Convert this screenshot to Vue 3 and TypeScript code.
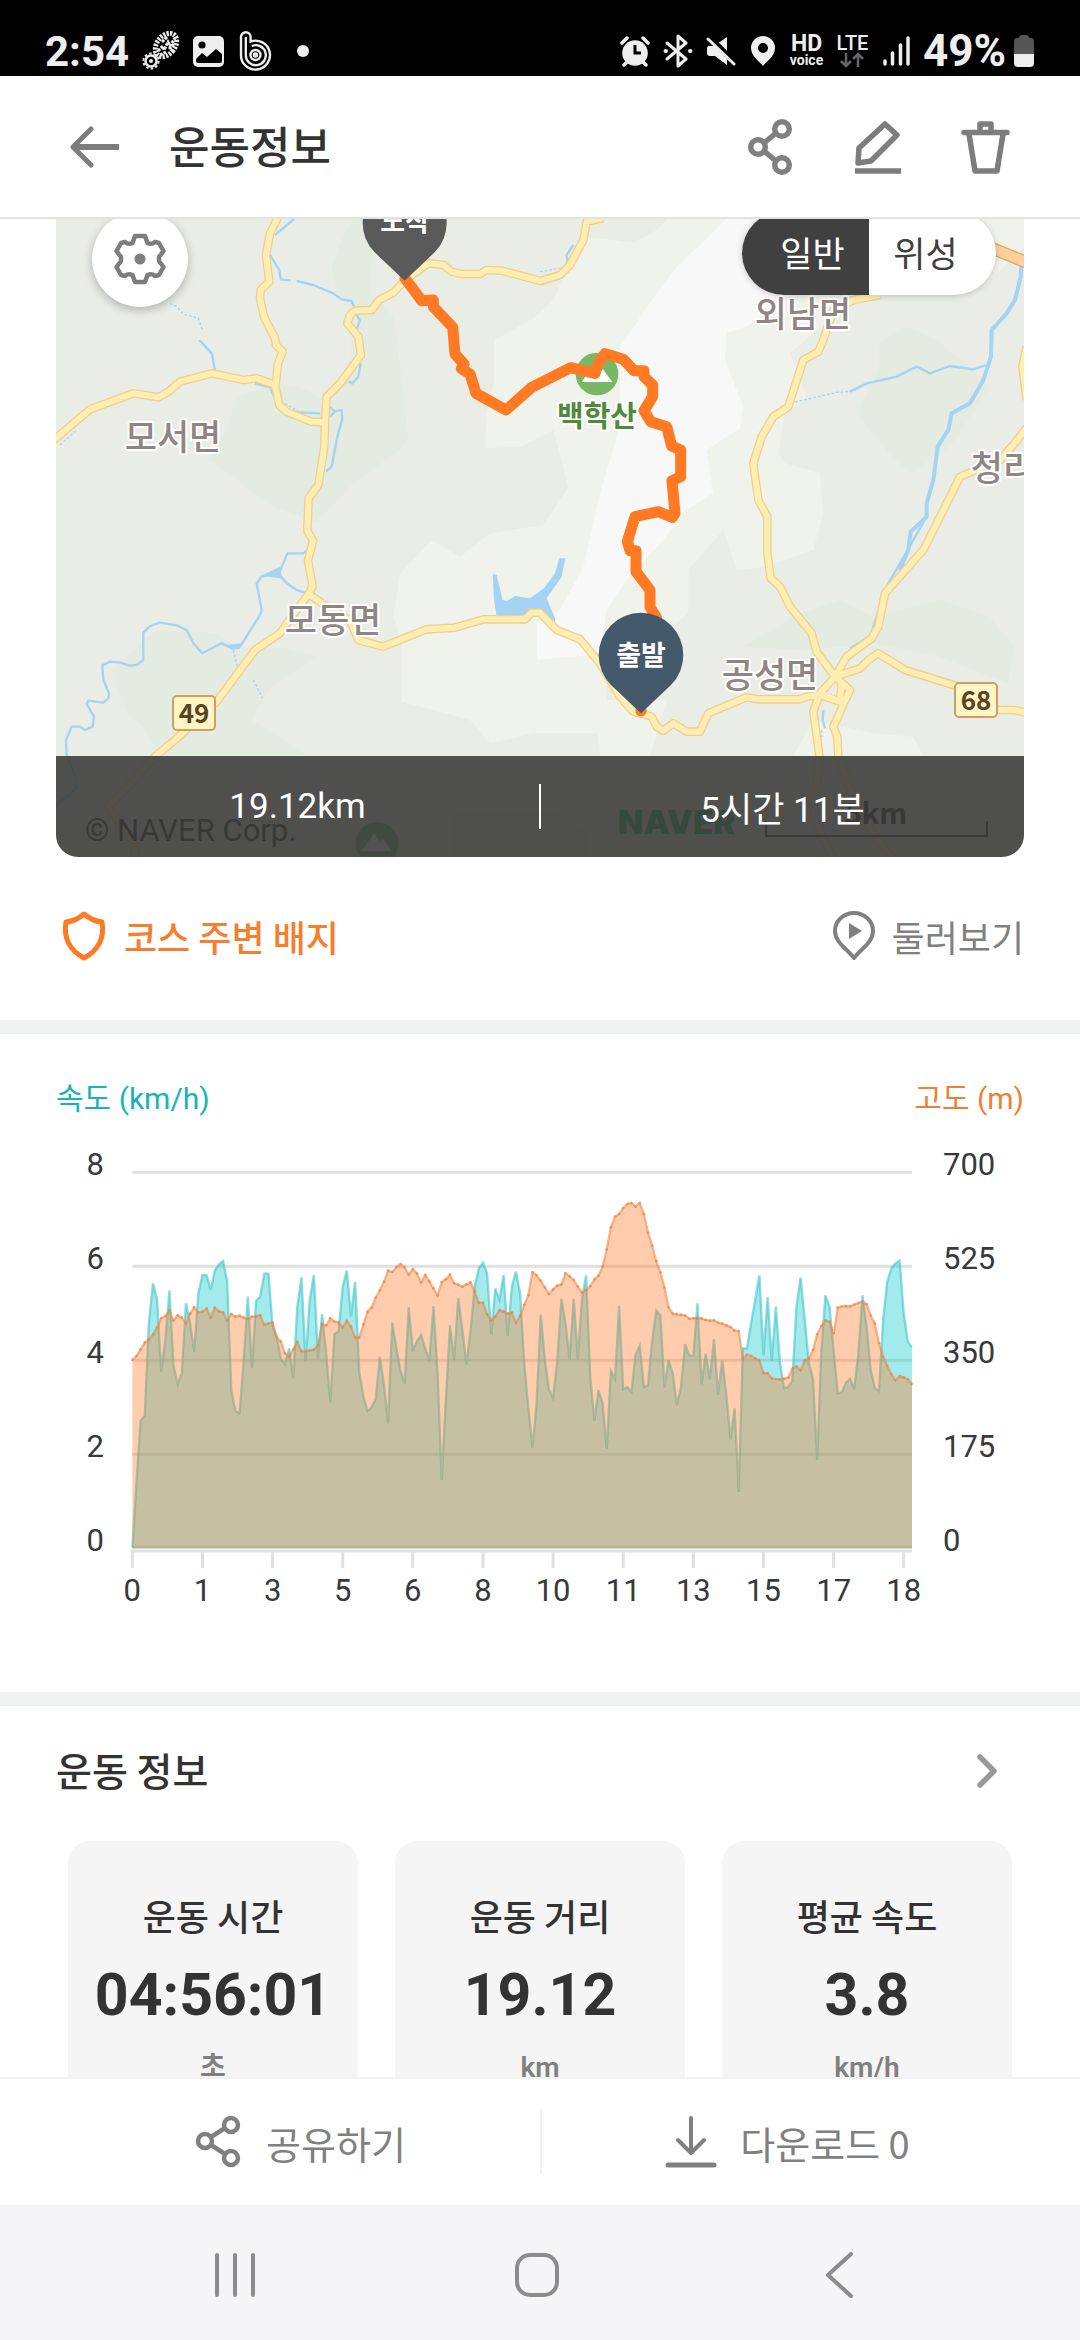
<script setup lang="ts">
import { ref } from 'vue'

type MapStyle = 'normal' | 'satellite'
const mapStyle = ref<MapStyle>('normal')

interface Place { name: string; x: number; y: number }
const places: Place[] = [
  { name: '모서면', x: 133, y: 250 },
  { name: '외남면', x: 763, y: 127 },
  { name: '청리면', x: 979, y: 281 },
  { name: '모동면', x: 293, y: 433 },
  { name: '공성면', x: 730, y: 488 },
]

const shields = [
  { no: '49', x: 133, y: 496 },
  { no: '68', x: 915, y: 483 },
]

const roads: string[] = [
  '720,40 690,100 678,165 688,245 662,270 660,295 672,350 705,415 708,435 728,455 714,490 706,560 718,615 740,635 815,665 850,667',
  '30,730 150,628 280,580 355,592 385,575 420,545 515,520 610,540 650,535 706,555',
  '1690,55 1640,65 1630,120 1590,195 1560,225 1502,243 1385,212 1340,210 1320,222 1265,222 1235,215 1210,195 1165,190 1095,240 1060,278 1018,300 995,330 945,332 930,345 922,370 955,410 963,465 900,550 860,590 855,667 853,740 835,855 806,895 802,992 819,1022 804,1082 818,1158 806,1182 740,1270 720,1300 645,1350 530,1505 405,1620 350,1665 300,1720 205,1820 285,1930 285,1990',
  '806,1182 860,1220 930,1260 955,1320 1028,1340 1160,1288 1245,1283 1330,1258 1455,1258 1475,1238 1500,1238 1550,1290 1620,1318 1680,1390 1740,1490 1780,1535 1835,1550 1850,1580 1870,1592 1900,1570 1940,1595 1980,1595 2005,1540 2120,1492 2155,1498 2280,1498 2300,1490 2340,1485 2400,1505 2405,1450',
  '2520,285 2440,300 2380,330 2360,390 2350,420 2335,455 2290,480 2245,620 2200,650 2165,710 2140,790 2155,900 2182,950 2182,1060 2192,1135 2220,1160 2250,1220 2315,1300 2330,1355 2385,1430',
  '2970,670 2920,735 2880,780 2760,830 2700,950 2650,1050 2535,1180 2515,1280 2495,1315 2420,1370 2385,1430 2340,1480 2320,1535 2340,1680 2320,1830 2350,1920 2400,2010',
  '2385,1430 2460,1405 2485,1380 2515,1360 2595,1410 2740,1455 2870,1530 2920,1530 2970,1540',
  '2385,1430 2430,1470 2380,1580 2392,1610 2395,1670 2440,1790 2500,1900 2570,1990',
  '2960,440 2947,500 2960,600',
]

const rivers: string[] = [
  '762,57 705,105', '690,165 718,210 722,238 752,241', '770,243 820,255 880,280 905,298 935,303 942,320',
  '962,490 955,530 938,550 925,545', '478,420 515,460 525,510', '645,550 690,562 700,585', '780,637 840,640',
  '870,622 885,634 905,630 907,655 890,720 875,800 858,815', '870,650 885,634', '950,345 960,362 950,388',
  '802,1050 790,1060 742,1060 718,1118 665,1130 650,1150 665,1230 660,1245 600,1340 570,1342 545,1330 487,1360 460,1330 440,1290 410,1276 360,1268 330,1278 310,1298 310,1380 290,1395 270,1397 240,1388 210,1385 187,1396 190,1440 207,1480 205,1495 190,1508 145,1502 140,1512 162,1550 158,1580 135,1590 120,1580 95,1580 78,1620 80,1665 110,1740 108,1768 48,1815',
  '715,1120 740,1150 770,1170 800,1180', '1585,205 1580,165 1600,135', '2350,1530 2348,1560 2355,1585',
]
const dottedRivers: string[] = [
  '390,310 410,320 430,342 475,355 487,390', '735,610 780,637', '60,735 110,690', '580,1350 592,1400',
  '640,1440 668,1494', '2265,606 2390,577 2430,575', '1500,215 1560,205', '2345,1590 2345,1620',
]

const track =
  '1095,235 1145,302 1180,300 1180,320 1238,382 1245,462 1272,492 1264,506 1290,522 1308,580 1398,630 1475,562 1592,503 1665,520 1676,488 1695,461 1750,478 1782,512 1812,512 1812,530 1838,555 1838,590 1812,632 1832,665 1880,680 1895,738 1922,750 1922,830 1896,842 1905,940 1897,952 1855,935 1785,950 1762,1025 1770,1052 1788,1052 1788,1115 1830,1170 1830,1220 1850,1255'

/* Samples run left to right, one every STEP units; the zero line is at BASE. */
const X0 = 277
const STEP = 2339 / 189
const BASE = 1225
const altitude: number[] = [
  660, 648, 628, 608, 598, 584, 563, 534, 528, 512, 541, 526, 533, 550, 521, 502, 518, 515, 506, 532,
  503, 514, 517, 542, 522, 530, 527, 533, 537, 530, 529, 526, 554, 550, 548, 591, 605, 640, 650, 628,
  606, 634, 634, 631, 629, 616, 552, 556, 535, 545, 548, 562, 542, 560, 592, 592, 553, 515, 503, 473,
  451, 425, 392, 396, 382, 372, 382, 404, 388, 400, 427, 405, 424, 445, 466, 426, 418, 404, 430, 434,
  440, 433, 427, 455, 488, 488, 523, 541, 530, 510, 515, 521, 517, 548, 528, 495, 465, 397, 406, 422,
  443, 462, 448, 437, 434, 400, 409, 420, 440, 458, 450, 438, 418, 407, 380, 328, 262, 230, 222, 204,
  192, 189, 200, 189, 223, 278, 317, 363, 397, 443, 502, 521, 523, 524, 527, 536, 535, 534, 535, 540,
  542, 541, 548, 551, 556, 561, 572, 573, 657, 644, 648, 655, 661, 699, 700, 715, 717, 718, 716, 713,
  686, 679, 691, 661, 656, 630, 583, 558, 541, 545, 580, 503, 499, 498, 499, 494, 489, 485, 493, 527,
  551, 609, 650, 677, 703, 721, 709, 712, 718, 732,
]
const speed: number[] = [
  1223, 1030, 842, 828, 550, 430, 480, 695, 600, 452, 678, 732, 700, 490, 550, 636, 460, 405, 406, 450,
  392, 373, 363, 425, 753, 813, 820, 660, 470, 683, 482, 470, 401, 401, 560, 590, 658, 672, 625, 715,
  500, 412, 664, 480, 405, 656, 522, 640, 787, 582, 574, 440, 392, 529, 426, 695, 768, 813, 802, 777,
  650, 735, 850, 548, 622, 692, 730, 502, 634, 604, 585, 625, 663, 498, 700, 1020, 780, 556, 660, 475,
  570, 673, 570, 440, 385, 368, 400, 583, 446, 480, 405, 588, 440, 395, 460, 670, 805, 923, 790, 524,
  660, 748, 774, 665, 476, 550, 658, 476, 658, 480, 406, 710, 842, 750, 790, 927, 692, 717, 498, 749,
  741, 756, 642, 617, 742, 736, 605, 511, 526, 742, 660, 700, 796, 740, 612, 647, 647, 490, 733, 641,
  718, 598, 764, 661, 765, 898, 805, 1056, 625, 626, 550, 480, 406, 646, 472, 663, 500, 670, 745, 740,
  724, 500, 413, 540, 670, 715, 960, 640, 466, 500, 630, 760, 757, 727, 716, 748, 640, 466, 560, 690,
  745, 753, 540, 425, 385, 370, 362, 520, 605, 622,
]
const px = (i: number): number => Math.round((X0 + i * STEP) * 10) / 10
const line = (d: number[]): string => d.map((y, i) => `${px(i)},${y}`).join(' ')
const area = (d: number[]): string => `${px(0)},${BASE} ${line(d)} ${px(d.length - 1)},${BASE}`

const yAxis = [
  { left: '8', right: '700' },
  { left: '6', right: '525' },
  { left: '4', right: '350' },
  { left: '2', right: '175' },
  { left: '0', right: '0' },
]
const xAxis = ['0', '1', '3', '5', '6', '8', '10', '11', '13', '15', '17', '18']

const stats = [
  { label: '운동 시간', value: '04:56:01', unit: '초' },
  { label: '운동 거리', value: '19.12', unit: 'km' },
  { label: '평균 속도', value: '3.8', unit: 'km/h' },
]
</script>

<template>
  <div class="screen">
    <div class="status">
      <div class="status-side">
        <span class="clock">2:54</span>
        <svg width="38" height="40" viewBox="0 0 38 40" fill="none" stroke="#eee">
          <circle cx="9" cy="30" r="5.500" stroke-width="2.500" />
          <circle cx="9" cy="30" r="7.600" stroke-width="2" stroke-dasharray="2.600 2.200" />
          <circle cx="9" cy="30" r="2" fill="#eee" stroke="none" />
          <ellipse cx="24" cy="14" rx="9" ry="13" transform="rotate(38 24 14)" stroke-width="5" stroke-dasharray="2.200 1.200" />
          <path d="M16 20l5-5 1 4 4-8 2 4 5-8M18 24l6-3M27 18l5-5M20 11l5-5" stroke-width="3" stroke-dasharray="3 1" />
        </svg>
        <svg width="32" height="32" viewBox="0 0 32 32">
          <rect width="31" height="31" y="1" rx="5" fill="#eee" />
          <circle cx="9" cy="10" r="3.600" fill="#000" />
          <path d="M3 24l6-6 5 4 9-8 6 5v7q0 2-2 2H5q-2 0-2-2z" fill="#000" />
        </svg>
        <svg width="34" height="42" viewBox="0 0 34 42" fill="none" stroke="#eee" stroke-width="2.400">
          <path d="M3 24V7a4.800 4.800 0 0 1 9.600 0v4.500A14.500 14.500 0 1 1 3 25z" />
          <path d="M7.800 25V7M7.800 25a10 10 0 1 0 6-9" />
          <circle cx="17.500" cy="25" r="5" />
          <circle cx="17.500" cy="25" r="1.500" />
        </svg>
        <i class="dot"></i>
      </div>
      <div class="status-side">
        <svg width="30" height="32" viewBox="0 0 30 32" fill="#eee">
          <circle cx="15" cy="18" r="12.800" />
          <path d="M2 8l5-5M28 8l-5-5M4 30l4-4M26 30l-4-4" stroke="#eee" stroke-width="3.500" stroke-linecap="round" />
          <path d="M15 10v8h6" fill="none" stroke="#000" stroke-width="3" />
        </svg>
        <svg width="30" height="34" viewBox="0 0 30 34" fill="none" stroke="#eee" stroke-width="3" stroke-linejoin="round" stroke-linecap="round">
          <path d="M4 9l19 16-8 7V2l8 7L4 25" />
          <path d="M2.500 17h.5M27 17h.5" stroke-width="4" />
        </svg>
        <svg width="30" height="32" viewBox="0 0 30 32" fill="#eee">
          <path d="M2 11h6l13-9v28L9 21H4q-3 0-3-3v-5z" />
          <path d="M1 0l29 29" stroke="#000" stroke-width="6" />
          <path d="M2 4l26 25" stroke="#eee" stroke-width="3" stroke-linecap="round" />
        </svg>
        <svg width="28" height="32" viewBox="0 0 28 32">
          <path d="M14 1a12 12 0 0 1 12 12c0 8-8 13-12 18C10 26 2 21 2 13A12 12 0 0 1 14 1zm0 7a5 5 0 1 0 0 10 5 5 0 0 0 0-10z" fill="#eee" />
        </svg>
        <span class="hd"><b>HD</b><small>voice</small></span>
        <span class="lte">
          <b>LTE</b>
          <svg width="26" height="16" viewBox="0 0 26 16" fill="none" stroke="#666" stroke-width="2.500">
            <path d="M7 1v13M2 9l5 5 5-5M19 15V2M14 7l5-5 5 5" />
          </svg>
        </span>
        <svg width="28" height="32" viewBox="0 0 28 32" stroke="#eee" stroke-width="3.500" stroke-linecap="round">
          <path d="M3 26v3M10.500 18v11M18.500 10v19M26 3v26" />
        </svg>
        <span class="battery">
          49%
          <svg width="22" height="34" viewBox="0 0 22 34">
            <path d="M6 4q0-3 3-3h4q3 0 3 3h2q3 0 3 4v12H1V8q0-4 3-4z" fill="#555" />
            <path d="M1 20h20v9q0 4-4 4H5q-4 0-4-4z" fill="#eee" />
          </svg>
        </span>
      </div>
    </div>

    <header class="bar">
      <button class="icon-btn" aria-label="뒤로">
        <svg width="52" height="44" viewBox="0 0 52 44" fill="none" stroke="#7d7d7d" stroke-width="6" stroke-linejoin="round">
          <path d="M50 22H6" /><path d="M22 4L4 22l18 18" stroke-width="5" stroke-linecap="round" />
        </svg>
      </button>
      <h1>운동정보</h1>
      <div class="actions">
        <button class="icon-btn" aria-label="공유">
          <svg width="58" height="58" viewBox="0 0 58 58" fill="none" stroke="#808080" stroke-width="5.500">
            <circle cx="40" cy="11" r="7.300" /><circle cx="16" cy="29" r="7.300" /><circle cx="40" cy="47" r="7.300" />
            <path d="M22 25l12-10M22 33l12 10" />
          </svg>
        </button>
        <button class="icon-btn" aria-label="편집">
          <svg width="58" height="58" viewBox="0 0 58 58" fill="none" stroke="#7d7d7d" stroke-width="5.500" stroke-linejoin="round">
            <path d="M36 6l12 11-26 26-13 2 1-15z" /><path d="M6 53h46" />
          </svg>
        </button>
        <button class="icon-btn" aria-label="삭제">
          <svg width="58" height="58" viewBox="0 0 58 58" fill="none" stroke="#7d7d7d" stroke-width="5.500" stroke-linejoin="round">
            <path d="M8 14.500h43" stroke-linecap="round" /><path d="M24 13V6h11v7M13 16l6 37h22l6-37" />
          </svg>
        </button>
      </div>
    </header>

    <main class="content">
      <section class="course">
        <div class="map">
          <svg class="map-art" viewBox="48 57 2904 1914">
            <rect x="48" y="57" width="2904" height="1914" fill="#e9ede5" />
            <g fill="#e4ebe0">
              <path d="M940 57L900 130 875 200 885 260 930 320V480L860 610 800 570 720 550 590 590 560 690 510 780 700 920 830 965 940 850 1080 750 1105 710 1080 500 1060 350 990 280 1000 57z" />
              <path d="M215 1410L350 1290 520 1300 600 1345H740L835 1370 690 1460 635 1560 800 1665H360L300 1570 260 1540z" />
            </g>
            <path fill="#f0f2ec" d="M1335 745L1340 640 1362 540V420L1480 355 1540 300 1570 230 1640 110 1780 128 1850 90 1880 57H2952V140L2840 250 2450 300 2330 390 2250 460 2300 590 2235 640 2215 760 2235 790 2340 820 2350 940 2320 1050 2180 1100 2090 1110 2050 990 1945 1110V1240L1810 1350 1700 1390V1600L1480 1600 1350 1630 1290 1560 1085 1505V1330L1060 1250 1080 1120 1175 1020 1260 1070 1350 1000 1510 975 1585 860 1540 690 1440 740z" />
            <path fill="#f7f8f7" d="M2060 57H2500L2400 250 2240 290 2130 375 2060 400 2055 480 2110 620 2100 685 2000 750 2020 880 1940 930 1870 1020 1760 1140 1700 1230 1680 1365 1490 1380V1270L1560 1230 1630 1100 1660 970 1680 880 1740 680V440L1850 280 1910 200z" />
            <path fill="#e9ede5" d="M2780 230L2840 310V380L2952 430V700L2400 560 2400 300z" />
            <path fill="#e4ebe0" d="M2515 430L2600 380 2690 420 2850 560 2730 740 2610 820 2540 750 2450 640 2515 510zM2110 1340L2280 1240 2400 1200 2500 1250 2700 1200 2850 1250 2920 1340 2905 1450 2700 1370 2500 1330 2300 1350z" />
            <path fill="#f0f2ec" d="M1500 1380L1700 1360 1690 1500 1880 1500 1830 1670H1680L1670 1590 1500 1580zM2260 1667L2320 1560 2500 1600 2620 1610 2650 1667z" />
            <path fill="#e2e3d4" d="M1240 1840L1560 1840 1640 1900V1971H1230z" />

            <g fill="none" stroke="#a5d3f3" stroke-width="7" stroke-linejoin="round">
              <polyline v-for="r in rivers" :key="r" :points="r" />
              <polyline points="2945,180 2942,230 2925,300 2900,340 2855,390 2853,470 2830,540 2790,610 2735,640 2725,690 2693,740 2680,840 2660,910 2660,950 2612,995 2605,1050 2580,1110" stroke-width="12" />
              <polyline points="2660,950 2580,1090 2540,1160 2510,1250 2490,1310 2430,1345" />
              <polyline points="2430,575 2480,550 2570,530 2630,500 2670,520 2730,498 2800,508 2840,495" />
              <polyline v-for="r in dottedRivers" :key="r" :points="r" stroke-width="4" stroke-dasharray="8 6" />
            </g>
            <path fill="#a5d3f3" d="M1358 1122L1370 1125 1388 1200 1400 1203 1425 1188 1470 1195 1512 1165 1545 1120 1558 1075 1576 1075 1565 1130 1520 1195 1545 1255 1545 1275 1500 1240 1455 1250 1370 1250 1362 1200zM660 1128L720 1100 725 1135zM560 1335L605 1330 600 1346 575 1350z" />

            <g fill="none" stroke-linejoin="round">
              <g stroke="#efd08a" stroke-width="26"><polyline v-for="r in roads" :key="r" :points="r" /></g>
              <g stroke="#ffeeb4" stroke-width="18">
                <polyline v-for="r in roads" :key="r" :points="r" />
                <polyline points="2340,1480 2400,1505" />
              </g>
              <path d="M2820 130L2960 187" stroke="#dfa765" stroke-width="38" />
              <path d="M2820 130L2960 187" stroke="#fad09a" stroke-width="30" />
            </g>

            <g v-for="p in [[1671, 522], [1011, 1930]]" :key="p[0]" :transform="`translate(${p[0]} ${p[1]})`">
              <circle r="64" fill="#78b865" />
              <path d="M-46 24L-8-32 8-6 18-14 46 24z" fill="#fff" />
            </g>

            <g transform="scale(3)">
              <text class="peak" x="557" y="227">백학산</text>
              <text v-for="p in places" :key="p.name" class="place" :x="p.x" :y="p.y">{{ p.name }}</text>
              <g v-for="s in shields" :key="s.no">
                <rect class="shield" :x="s.x" :y="s.y" width="42" height="34" rx="4" />
                <text class="shield-no" :x="s.x + 21" :y="s.y + 27">{{ s.no }}</text>
              </g>
              <text class="copyright" x="45" y="641">© NAVER Corp.</text>
              <text class="brand" x="578" y="634">NAVER</text>
              <text class="scale" x="836" y="624">5km</text>
              <path d="M726 621v15h221v-15" fill="none" stroke="#222" stroke-width="2" />
            </g>

            <polyline :points="track" fill="none" stroke="#ff7a22" stroke-width="33" stroke-linejoin="round" stroke-linecap="round" />
            <circle cx="1803" cy="1532" r="17" fill="#ff7a22" />
            <path fill="#5a5a5a" d="M1094 242L1004 157A126 126 0 1 1 1184 157z" />
            <path fill="#44596b" d="M1803 1540L1713 1455A127 127 0 1 1 1893 1455z" />
            <g transform="scale(3)">
              <text class="pin" x="365" y="31">도착</text>
              <text class="pin" x="601" y="465">출발</text>
            </g>
          </svg>

          <div class="map-controls">
            <button class="gear" aria-label="지도 설정">
              <svg width="52" height="52" viewBox="0 0 52 52" fill="none" stroke="#7d7d7d" stroke-width="4.500" stroke-linejoin="round">
                <path d="M21 3h10l2.500 7q4 2 7.500-1l4 1 4.500 8-4.500 6v4l4.500 6-4.500 8-4 1q-3.500-3-7.500-1L31 49H21l-2.500-7q-4-2-7.500 1l-4-1-4.500-8L7 28v-4l-4.500-6L7 10l4-1q3.500 3 7.500 1z" />
                <circle cx="26" cy="26" r="5.500" fill="#7d7d7d" stroke="none" />
              </svg>
            </button>
            <div class="toggle">
              <button :class="{ on: mapStyle === 'normal' }" @click="mapStyle = 'normal'">일반</button>
              <button :class="{ on: mapStyle === 'satellite' }" @click="mapStyle = 'satellite'">위성</button>
            </div>
          </div>

          <div class="summary">
            <span>19.12km</span>
            <i></i>
            <span>5시간 11분</span>
          </div>
        </div>

        <div class="links">
          <a href="#badges" class="badge-link">
            <svg width="56" height="52" viewBox="0 0 56 52" fill="none" stroke="#ff7a22" stroke-width="5" stroke-linejoin="round">
              <path d="M28 4q8 7 18 8Q50 36 28 48 6 36 10 12 20 11 28 4z" />
            </svg>
            코스 주변 배지
          </a>
          <a href="#tour" class="tour-link">
            <svg width="44" height="52" viewBox="0 0 44 52">
              <path d="M22 48C15 39 3 32 3 21a19 18 0 0 1 38 0c0 11-12 18-19 27z" fill="none" stroke="#808080" stroke-width="4" stroke-linejoin="round" />
              <path d="M17 13v16l13-8z" fill="#808080" />
            </svg>
            둘러보기
          </a>
        </div>
      </section>

      <section class="graph">
        <div class="legend"><span class="speed">속도 (km/h)</span><span class="alt">고도 (m)</span></div>
        <svg class="chart" viewBox="48 0 2904 1440">
          <g stroke="#e0e0e0" stroke-width="9">
            <path d="M277 97H2616M277 379H2616M277 661H2616M277 943H2616M277 1222H2616M273 1233H2616" />
            <path v-for="(t, i) in xAxis" :key="t" :d="`M${px(i * 17)} 1233V1284`" />
          </g>
          <polygon :points="area(speed)" fill="#16cacf" fill-opacity=".4" />
          <polyline :points="line(speed)" fill="none" stroke="#3fc4c9" stroke-opacity=".6" stroke-width="7" />
          <polygon :points="area(altitude)" fill="#ff7b2a" fill-opacity=".38" />
          <polyline :points="line(altitude)" fill="none" stroke="#ee8340" stroke-opacity=".55" stroke-width="7" />
          <circle v-for="(y, i) in altitude" :key="i" :cx="px(i)" :cy="y" r="4" fill="#ee8340" fill-opacity=".7" />
          <g transform="scale(3)">
            <g v-for="(row, i) in yAxis" :key="row.right">
              <text class="tick end" x="64" :y="35 + i * 94">{{ row.left }}</text>
              <text class="tick" x="903" :y="35 + i * 94">{{ row.right }}</text>
            </g>
            <text v-for="(t, i) in xAxis" :key="t" class="tick mid" :x="px(i * 17) / 3" y="461">{{ t }}</text>
          </g>
        </svg>
      </section>

      <section class="info">
        <div class="info-head">
          <h2>운동 정보</h2>
          <button class="icon-btn" aria-label="더보기">
            <svg width="26" height="40" viewBox="0 0 26 40" fill="none" stroke="#999" stroke-width="5.500" stroke-linecap="round" stroke-linejoin="round">
              <path d="M6 6l14 14L6 34" />
            </svg>
          </button>
        </div>
        <div class="cards">
          <article v-for="s in stats" :key="s.label" class="card">
            <h3>{{ s.label }}</h3>
            <strong>{{ s.value }}</strong>
            <small>{{ s.unit }}</small>
          </article>
        </div>
      </section>
    </main>

    <footer class="tools">
      <button class="tool">
        <svg width="50" height="54" viewBox="0 0 50 54" fill="none" stroke="#808080" stroke-width="4.500">
          <circle cx="37" cy="10" r="7" /><circle cx="11" cy="26" r="7" /><circle cx="37" cy="43" r="7" />
          <path d="M17 22l14-9M17 30l14 9" />
        </svg>
        공유하기
      </button>
      <button class="tool download">
        <svg width="54" height="54" viewBox="0 0 54 54" fill="none" stroke="#808080" stroke-width="4" stroke-linecap="round" stroke-linejoin="round">
          <path d="M27 3v35M14 25l13 13 13-13" /><path d="M4 50h46" stroke-width="5" />
        </svg>
        다운로드 0
      </button>
    </footer>

    <nav class="sysnav">
      <button class="icon-btn" aria-label="최근 앱">
        <svg width="46" height="46" viewBox="0 0 46 46" stroke="#8c8c8c" stroke-width="4" stroke-linecap="round"><path d="M5 3v40M23 3v40M41 3v40" /></svg>
      </button>
      <button class="icon-btn" aria-label="홈">
        <svg width="46" height="46" viewBox="0 0 46 46" fill="none" stroke="#8c8c8c" stroke-width="4"><rect x="3" y="3" width="40" height="40" rx="13" /></svg>
      </button>
      <button class="icon-btn" aria-label="이전">
        <svg width="46" height="46" viewBox="0 0 46 46" fill="none" stroke="#8c8c8c" stroke-width="4" stroke-linecap="round" stroke-linejoin="round"><path d="M35 2L12 23l23 21" /></svg>
      </button>
    </nav>
  </div>
</template>

<style>
body { margin: 0; background: #fff; }
</style>

<style scoped>
* { box-sizing: border-box; }
.screen {
  display: flex;
  flex-direction: column;
  height: 100vh;
  overflow: hidden;
  background: #fff;
  color: #333;
  font-family: "Noto Sans CJK KR", sans-serif;
}
svg { display: block; flex: none; }
button { border: 0; background: none; padding: 0; font: inherit; color: inherit; }
.icon-btn { display: block; }
h1, h2, h3 { margin: 0; font-weight: 500; }

.status {
  flex: none;
  display: flex;
  justify-content: space-between;
  height: 76px;
  padding: 26px 45px 0;
  background: #000;
  color: #eee;
  font-family: Roboto, sans-serif;
}
.status-side { display: flex; align-items: center; height: 50px; gap: 13px; }
.clock { font-size: 42px; font-weight: 700; }
.battery { display: flex; align-items: center; gap: 7px; font-size: 44px; font-weight: 700; }
.dot { width: 12px; height: 12px; margin-left: 12px; border-radius: 50%; background: #eee; }
.hd, .lte { display: flex; flex-direction: column; align-items: center; width: 33px; }
.hd b { font-size: 23px; line-height: 18px; }
.hd small { font-size: 14px; font-weight: 700; line-height: 14px; }
.lte b { font-size: 20px; line-height: 18px; font-weight: 500; }

.bar {
  flex: none;
  display: flex;
  align-items: center;
  height: 143px;
  padding: 0 66px 0 69px;
  border-bottom: 2px solid #e2e2e2;
}
.bar h1 { margin-left: 48px; padding-bottom: 4px; font-size: 44px; line-height: 60px; }
.actions { display: flex; gap: 49px; margin-left: auto; }

.content { flex: 1; min-height: 0; overflow: hidden; }
.course { border-bottom: 14px solid #f1f2f4; padding: 0 56px; }
.map { position: relative; overflow: hidden; border-radius: 0 0 22px 22px; }
.map-art { width: 100%; height: auto; }
.place { font-size: 35px; font-weight: 500; fill: #8f8585; text-anchor: middle; stroke: #fff; stroke-width: 4px; paint-order: stroke; stroke-linejoin: round; }
.peak { font-size: 29px; font-weight: 700; fill: #4f8a3c; text-anchor: middle; stroke: #fff; stroke-width: 4px; paint-order: stroke; stroke-linejoin: round; }
.shield { fill: #fff6c4; stroke: #cf9f64; stroke-width: 2px; }
.shield-no { font-size: 26px; font-weight: 700; fill: #5a4225; text-anchor: middle; }
.copyright { font-family: Roboto, sans-serif; font-size: 31px; fill: #222; }
.brand { font-family: Inter, sans-serif; font-size: 33px; font-weight: 900; fill: #10b45a; }
.scale { font-size: 29px; font-weight: 700; fill: #222; text-anchor: middle; }
.pin { font-size: 27px; font-weight: 700; fill: #fff; text-anchor: middle; }

.map-controls {
  position: absolute;
  top: -8px;
  left: 36px;
  right: 28px;
  display: flex;
  justify-content: space-between;
  align-items: flex-start;
}
.gear {
  display: grid;
  place-items: center;
  width: 96px;
  height: 96px;
  border-radius: 50%;
  background: #fff;
  box-shadow: 0 3px 10px rgba(0, 0, 0, .25);
}
.toggle { display: flex; border-radius: 42px; overflow: hidden; background: #fff; box-shadow: 0 1px 6px rgba(0, 0, 0, .2); }
.toggle button { width: 127px; height: 84px; padding: 0 14px 4px 0; font-size: 35px; color: #404040; }
.toggle .on { background: #404040; color: #fff; padding: 0 0 4px 14px; }

.summary {
  position: absolute;
  left: 0;
  right: 0;
  bottom: 0;
  display: flex;
  align-items: center;
  height: 101px;
  background: rgba(60, 60, 60, .89);
  color: #fff;
  font-family: Roboto, "Noto Sans CJK KR", sans-serif;
  font-size: 35px;
}
.summary span { flex: 1; text-align: center; }
.summary i { width: 2px; height: 45px; background: #fff; }

.links { display: flex; justify-content: space-between; align-items: center; height: 163px; padding-bottom: 6px; font-size: 36px; }
.links a { display: flex; align-items: center; gap: 12px; color: #808080; text-decoration: none; }
.links .badge-link { color: #f57f2e; font-weight: 500; }
.links .tour-link { gap: 16px; }

.graph { padding: 43px 56px 72px; border-bottom: 14px solid #f1f2f4; }
.legend { display: flex; justify-content: space-between; height: 44px; margin-bottom: 19px; font-size: 30px; line-height: 44px; }
.speed { color: #18b3b8; }
.alt { color: #ee7f35; }
.legend span { font-family: Roboto, "Noto Sans CJK KR", sans-serif; }
.chart { width: 100%; height: auto; }
.tick { font-family: Roboto, sans-serif; font-size: 31px; fill: #37393d; }
.tick.end { text-anchor: end; }
.tick.mid { text-anchor: middle; }

.info-head { display: flex; justify-content: space-between; align-items: center; height: 135px; padding: 0 80px 5px 56px; }
.info-head h2 { padding-bottom: 4px; font-size: 39px; line-height: 56px; }
.cards { display: flex; gap: 37px; padding: 0 68px; }
.card {
  flex: 1;
  display: flex;
  flex-direction: column;
  align-items: center;
  height: 300px;
  padding-top: 48px;
  border-radius: 22px;
  background: #f5f5f5;
}
.card h3 { font-size: 36px; line-height: 52px; }
.card strong { margin-top: 17px; font-family: Roboto, sans-serif; font-size: 59px; line-height: 74px; }
.card small { margin-top: 18px; font-family: Roboto, "Noto Sans CJK KR", sans-serif; font-size: 28px; line-height: 36px; font-weight: 600; color: #808080; }

.tools { flex: none; display: flex; align-items: center; height: 128px; border-top: 2px solid #f2f2f2; background: #fff; color: #808080; font-size: 38px; }
.tool { width: 50%; height: 64px; display: flex; align-items: center; justify-content: center; gap: 22px; padding-left: 60px; }
.tool.download { padding: 0 48px 0 0; border-left: 2px solid #f0f0f0; }

.sysnav { flex: none; display: flex; align-items: center; justify-content: center; gap: 256px; height: 135px; padding: 4px 6px 0 0; background: #f5f5f7; }
</style>
